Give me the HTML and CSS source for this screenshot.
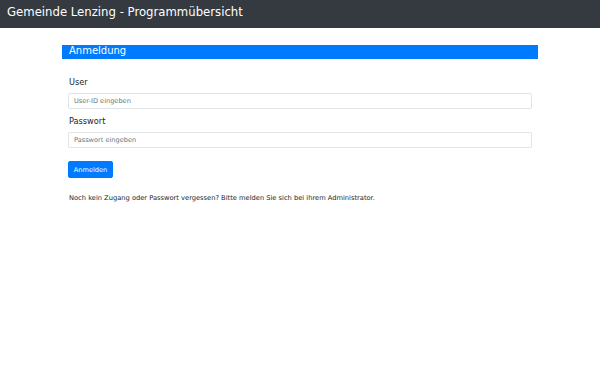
FILE: index.html
```html
<!DOCTYPE html>
<html lang="de">
<head>
<meta charset="utf-8">
<title>Gemeinde Lenzing - Programmübersicht</title>
<link rel="stylesheet" href="styles.css">
</head>
<body>
<header class="topbar">Gemeinde Lenzing - Programmübersicht</header>
<main class="login">
  <div class="login-title">Anmeldung</div>
  <form class="login-form">
    <div class="field">
      <label class="field-label" for="user">User</label>
      <input class="field-input" id="user" type="text" placeholder="User-ID eingeben">
    </div>
    <div class="field">
      <label class="field-label" for="pw">Passwort</label>
      <input class="field-input" id="pw" type="password" placeholder="Passwort eingeben">
    </div>
    <button class="btn" type="button">Anmelden</button>
    <p class="hint">Noch kein Zugang oder Passwort vergessen? Bitte melden Sie sich bei ihrem Administrator.</p>
  </form>
</main>
</body>
</html>
```
FILE: styles.css
```css
* { box-sizing: border-box; }
html, body { margin: 0; padding: 0; background: #fff; }
body {
  font-family: "DejaVu Sans", sans-serif;
  color: #212529;
  width: 600px;
  height: 375px;
}
.topbar {
  height: 28px;
  background: #343a40;
  color: #fff;
  font-size: 11.7px;
  line-height: 14px;
  padding: 5px 0 0 7px;
}
.login {
  width: 476px;
  margin: 17px 0 0 62px;
}
.login-title {
  height: 14px;
  background: #007bff;
  color: #fff;
  font-size: 10px;
  line-height: 12px;
  padding-left: 7px;
}
.login-form {
  padding: 17px 6px 0 6px;
}
.field {
  display: flex;
  flex-direction: column;
  gap: 5px;
  margin-bottom: 6px;
}
.field-label {
  font-size: 8.2px;
  line-height: 12px;
  padding-left: 1px;
  color: #212529;
}
.field-input {
  height: 16px;
  width: 100%;
  border: 1px solid #e1e4e7;
  border-radius: 2px;
  padding: 0 5px;
  font-family: "DejaVu Sans", sans-serif;
  font-size: 6.6px;
  color: #495057;
  background: #fff;
  outline: none;
}
.field-input::placeholder { color: #6c757d; }
.btn {
  display: block;
  margin-top: 13px;
  width: 45px;
  height: 17px;
  padding: 0;
  border: 1px solid #007bff;
  border-radius: 2px;
  background: #007bff;
  color: #fff;
  font-family: "DejaVu Sans", sans-serif;
  font-size: 6.6px;
}
.hint {
  margin: 16px 0 0 1px;
  font-size: 6.7px;
  line-height: 9px;
}
```
